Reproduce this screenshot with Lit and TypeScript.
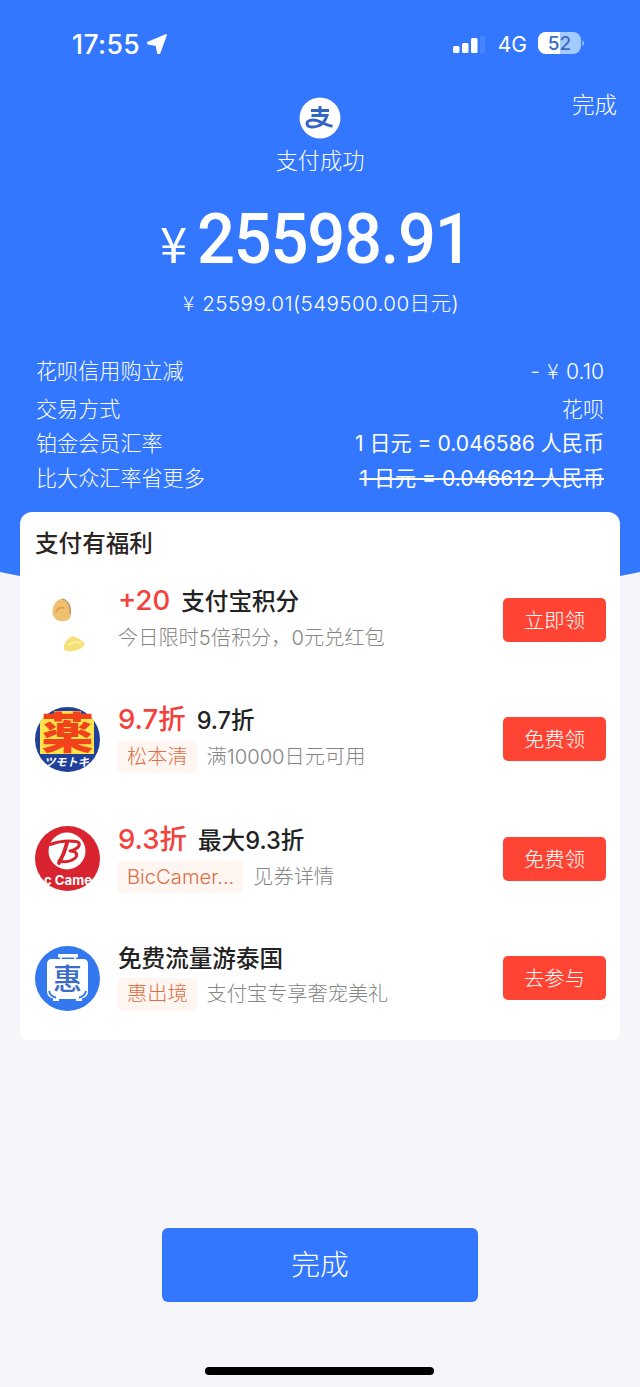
import { LitElement, html, svg, css, nothing, TemplateResult } from "lit";
import { customElement, property } from "lit/decorators.js";

interface Benefit {
  icon: string;
  accent?: string;
  title: string;
  tag?: string;
  note: string;
  action: string;
}

const BENEFITS: Benefit[] = [
  { icon: "coins", accent: "+20", title: "支付宝积分", note: "今日限时5倍积分，0元兑红包", action: "立即领" },
  { icon: "drug", accent: "9.7折", title: "9.7折", tag: "松本清", note: "满10000日元可用", action: "免费领" },
  { icon: "bic", accent: "9.3折", title: "最大9.3折", tag: "BicCamer...", note: "见券详情", action: "免费领" },
  { icon: "travel", title: "免费流量游泰国", tag: "惠出境", note: "支付宝专享奢宠美礼", action: "去参与" },
];

const ICONS: Record<string, TemplateResult> = {
  coins: svg`
    <path d="M18 28c-2-6 2-15 8-16 6 0 10 7 10 14 0 5-2 8-7 8-5 1-9-1-11-6z" fill="#f0c070"/>
    <path d="M27 12c6 1 9 7 8 15" fill="none" stroke="#b98a58" stroke-width="1.2"/>
    <path d="M21 25c2-4 5-5 8-4" fill="none" stroke="#e0a04c" stroke-width="2"/>
    <path d="M29 63c-1-6 3-12 9-14 4 2 10 4 12 8-3 6-13 9-21 6z" fill="#f8e078"/>
    <path d="M34 58c3-3 8-4 12-2" fill="none" stroke="#fff0a0" stroke-width="2"/>`,
  drug: svg`
    <clipPath id="c"><circle cx="32.5" cy="32.5" r="32.5"/></clipPath>
    <g clip-path="url(#c)">
      <rect width="65" height="65" fill="#20409a"/>
      <path d="M19 4h27v5h13v38H5V9h14z" fill="#ffe34a"/>
    </g>
    <text x="6" y="41.5" font-size="43" font-weight="900" fill="#f2421c" textLength="53" lengthAdjust="spacingAndGlyphs">薬</text>
    <text x="9" y="59" font-size="11" font-weight="700" font-style="italic" fill="#fff" textLength="45" lengthAdjust="spacingAndGlyphs">ツモトキ</text>`,
  bic: svg`
    <circle cx="32.5" cy="32.5" r="32.5" fill="#d9232e"/>
    <circle cx="32" cy="25" r="18.5" fill="#fff"/>
    <path d="M15 18.500c8-3 18-4 26-3 6 1 4 7-6 9.500 8 0 9 6 2 9-4 2-9 2-13 1" fill="none" stroke="#d9232e" stroke-width="3" stroke-linecap="round" stroke-linejoin="round"/>
    <path d="M32 17c-2 8-4.500 14-8 20" fill="none" stroke="#d9232e" stroke-width="3.800" stroke-linecap="round"/>
    <text x="9" y="59" class="latin" font-size="13" font-weight="700" fill="#fff" textLength="48" lengthAdjust="spacingAndGlyphs">c Came</text>`,
  travel: svg`
    <circle cx="32.5" cy="32.5" r="32.5" fill="#3478f0"/>
    <rect x="23" y="8" width="20" height="3.500" rx="1" fill="#fff"/>
    <path d="M26 10v4M40 10v4" stroke="#fff" stroke-width="1.500"/>
    <path d="M17 13h31q5 0 5 5v27q0 6-6 7.500v2.500h-6v-2H24v2h-6v-2.500q-6-1.500-6-7.500V18q0-5 5-5z" fill="#fff"/>
    <path d="M14 45c1 4 3 6 7 6.500M51 45c-1 4-3 6-7 6.500" fill="none" stroke="#3478f0" stroke-width="1.800"/>
    <text x="32.5" y="43.500" text-anchor="middle" font-size="29" font-weight="500" fill="#3b6cc8">惠</text>`,
};

@customElement("benefit-icon")
export class BenefitIcon extends LitElement {
  @property() name = "";
  static styles = css`
    :host { display: block; width: 65px; height: 65px; }
    svg { display: block; overflow: visible; font-family: "Noto Sans CJK JP", sans-serif; }
    .latin { font-family: Inter, sans-serif; }
  `;
  render() {
    return html`<svg width="65" height="65" viewBox="0 0 65 65">${ICONS[this.name]}</svg>`;
  }
}

@customElement("benefit-row")
export class BenefitRow extends LitElement {
  @property({ attribute: false }) item!: Benefit;
  static styles = css`
    :host { display: flex; align-items: center; height: 119.5px; padding: 0 14px 0 15px; box-sizing: border-box; }
    .body { flex: 1; margin-left: 18px; min-width: 0; padding-bottom: 4px; white-space: nowrap; }
    .head { display: flex; align-items: baseline; height: 36px; line-height: 36px; }
    .accent { font-size: 27.5px; font-weight: 500; color: #f5413c; margin-right: 11px; }
    .title { font-size: 23.6px; font-weight: 500; color: #222; }
    .sub { display: flex; align-items: center; height: 32px; line-height: 32px; margin-top: 4px; font-weight: 300; font-size: 20.2px; color: #858585; }
    .tagged .sub { margin-top: 4px; }
    .plain .head { height: 34px; line-height: 34px; }
    .plain .sub { margin-top: 1px; height: 34px; }
    .tag { background: #fff6f1; color: #dc6f48; padding: 0 9px; margin-right: 10px; border-radius: 3px; }
    button { width: 103px; height: 44px; padding: 0; border: 0; border-radius: 5px; background: #ff4433; color: #fff; font: inherit; font-size: 20.3px; font-weight: 300; line-height: 45px; }
  `;
  render() {
    const { icon, accent, title, tag, note, action } = this.item;
    return html`
      <benefit-icon name=${icon}></benefit-icon>
      <div class="body ${accent ? "" : "plain"} ${tag ? "tagged" : ""}">
        <div class="head">
          ${accent ? html`<span class="accent">${accent}</span>` : nothing}<span class="title">${title}</span>
        </div>
        <div class="sub">${tag ? html`<span class="tag">${tag}</span>` : nothing}<span>${note}</span></div>
      </div>
      <button>${action}</button>`;
  }
}

@customElement("app-root")
export class AppRoot extends LitElement {
  static styles = css`
    :host { display: flex; flex-direction: column; width: 640px; height: 1387px; overflow: hidden; background: #f6f5f9; font-family: Inter, "Noto Sans CJK SC", sans-serif; color: #fff; }
    .hero { height: 582px; flex: none; background: #3377ff; clip-path: polygon(0 0, 640px 0, 640px 572px, 590px 582px, 50px 582px, 0 572px); display: flex; flex-direction: column; }
    .status { display: flex; align-items: center; height: 88px; padding: 0 55px 0 72px; box-sizing: border-box; }
    .time { font-size: 26.5px; font-weight: 500; letter-spacing: 0.4px; margin-right: 6px; }
    .signal { margin-left: auto; }
    .net { font-size: 21px; font-weight: 400; margin: 0 11px 0 13px; }
    .battery { display: block; }
    .nav { display: flex; justify-content: flex-end; height: 34px; line-height: 34px; padding-right: 23px; font-size: 22.5px; font-weight: 300; }
    .logo { display: block; margin: -25px auto 0; }
    .state { height: 44px; line-height: 44px; text-align: center; font-size: 22.2px; font-weight: 300; }
    .amount { display: flex; align-items: baseline; height: 82px; line-height: 82px; margin-top: 15px; padding-left: 160px; }
    .digits { font-family: Roboto, sans-serif; font-size: 70px; font-weight: 500; letter-spacing: -1.3px; transform: scaleX(0.955); transform-origin: 0 50%; margin-left: 10px; }
    .yen { font-family: "Noto Sans CJK SC", sans-serif; font-size: 49px; font-weight: 400; line-height: 1; }
    .origin { display: flex; justify-content: center; align-items: baseline; gap: 8px; height: 30px; line-height: 30px; margin-top: 9px; padding-left: 2px; font-size: 20.6px; font-weight: 300; letter-spacing: 0.4px; }
    .mark { font-family: "Noto Sans CJK SC", sans-serif; line-height: 1; }
    .facts { display: flex; flex-direction: column; margin-top: 36px; padding: 0 36px; font-size: 21.1px; font-weight: 300; }
    .fact { display: flex; justify-content: space-between; height: 34.5px; line-height: 34.5px; }
    .fact:first-child { margin-bottom: 3px; }
    .minus { word-spacing: 1.5px; }
    .strong { font-weight: 400; }
    .old { text-decoration: line-through; }
    .card { position: relative; flex: none; margin: -70px 20px 0 20px; width: 600px; height: 528px; box-sizing: border-box; border-radius: 12px 12px 6px 6px; background: #fff; }
    .heading { height: 48px; line-height: 64px; padding-left: 15px; font-size: 23.6px; font-weight: 500; color: #2b2625; }
    .done { width: 316px; height: 74px; margin: 188px auto 0; padding: 0; border: 0; border-radius: 6px; background: #3377ff; color: #fff; font: inherit; font-size: 28.7px; font-weight: 300; line-height: 74px; flex: none; }
    .home { width: 229px; height: 8px; flex: none; margin: 65px 0 0 205px; border-radius: 4px; background: #000; }
  `;

  render() {
    return html`
      <div class="hero">
        <div class="status">
          <span class="time">17:55</span>
          <svg width="22" height="21" viewBox="0 0 22 21"><path d="M20 1 13.500 19h-1.500L10.500 11 2 9.500V8.500z" fill="#fff" stroke="#fff" stroke-width="1.800" stroke-linejoin="round"/></svg>
          <svg class="signal" width="32" height="18" viewBox="0 0 32 18">
            <g fill="#fff"><rect x="0" y="11" width="6.5" height="7" rx="1.5"/><rect x="9" y="8" width="6.5" height="10" rx="1.5"/><rect x="18" y="3" width="6.5" height="15" rx="1.5"/><rect x="27" y="1" width="5" height="17" rx="1.5" opacity=".1"/></g>
          </svg>
          <span class="net">4G</span>
          <svg class="battery" width="47" height="24" viewBox="0 0 47 24">
            <clipPath id="b"><rect x="0" y="0" width="43" height="22" rx="8"/></clipPath>
            <g clip-path="url(#b)"><rect width="43" height="24" fill="#a3cbff"/><rect width="22" height="24" fill="#fff"/></g>
            <path d="M44.500 8c2 1.500 2 5 0 6.500z" fill="#a3cbff"/>
            <text x="21.500" y="17.700" text-anchor="middle" font-size="19" font-weight="500" fill="#3d6bc4">52</text>
          </svg>
        </div>
        <div class="nav">完成</div>
        <svg class="logo" width="42" height="42" viewBox="0 0 42 42">
          <circle cx="21" cy="21" r="20.500" fill="#fff"/>
          <path d="M12 13.500h18M21 9v9M12.500 18.500h15.500c-1.500 5-5 9-9 10.500-5 1.800-11 1.200-11-2.300 0-3.500 5.500-4.500 10-3 5 1.700 10 4.500 15.500 5.500" fill="none" stroke="#3565c4" stroke-width="2.900"/>
        </svg>
        <div class="state">支付成功</div>
        <div class="amount"><span class="yen">¥</span><span class="digits">25598.91</span></div>
        <div class="origin"><span class="mark">¥</span><span>25599.01(549500.00日元)</span></div>
        <div class="facts">
          <div class="fact"><span>花呗信用购立减</span><span class="minus">- <span class="mark">¥</span> 0.10</span></div>
          <div class="fact"><span>交易方式</span><span>花呗</span></div>
          <div class="fact"><span>铂金会员汇率</span><span class="strong">1 日元 = 0.046586 人民币</span></div>
          <div class="fact"><span>比大众汇率省更多</span><span class="strong old">1 日元 = 0.046612 人民币</span></div>
        </div>
      </div>
      <div class="card">
        <div class="heading">支付有福利</div>
        ${BENEFITS.map((item) => html`<benefit-row .item=${item}></benefit-row>`)}
      </div>
      <button class="done">完成</button>
      <div class="home"></div>`;
  }
}
